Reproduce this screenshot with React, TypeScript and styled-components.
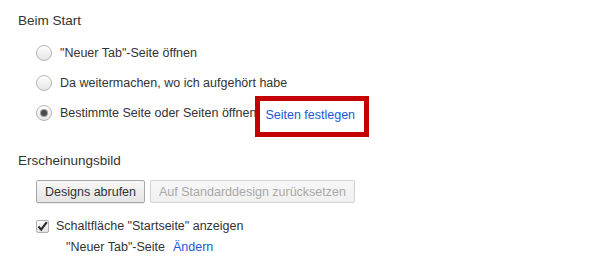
import React from 'react';
import styled, { createGlobalStyle } from 'styled-components';

const GlobalStyle = createGlobalStyle`
  body {
    margin: 0;
    background: #ffffff;
    font-family: "Liberation Sans", Arial, sans-serif;
    font-size: 12.5px;
    color: #333333;
  }
`;

const Page = styled.div`
  width: 600px;
  height: 260px;
  padding: 11px 0 0 18px;
  box-sizing: border-box;
  display: flex;
  flex-direction: column;
`;

const Heading = styled.div<{ gap: number }>`
  height: 20px;
  line-height: 20px;
  font-size: 13.5px;
  color: #333333;
  margin-top: ${props => props.gap}px;
`;

const Group = styled.div<{ gap: number }>`
  display: flex;
  flex-direction: column;
  padding-left: 18px;
  margin-top: ${props => props.gap}px;
`;

const Row = styled.div<{ height: number; indent?: number; top?: number }>`
  display: flex;
  align-items: center;
  height: ${props => props.height}px;
  padding-left: ${props => props.indent || 0}px;
  margin-top: ${props => props.top || 0}px;
  white-space: nowrap;
`;

const Radio = styled.span<{ checked?: boolean }>`
  width: 14px;
  height: 14px;
  border-radius: 50%;
  border: 1px solid #b4b4b4;
  background: linear-gradient(#fdfdfd, #e6e6e6);
  box-shadow: inset 0 1px 1px #ffffff;
  margin-right: 8px;
  flex-shrink: 0;
  display: flex;
  align-items: center;
  justify-content: center;
  &::after {
    content: '';
    display: ${props => (props.checked ? 'block' : 'none')};
    width: 6px;
    height: 6px;
    border-radius: 50%;
    background: #4a4a4a;
    box-shadow: 0 0 0 1px #9a9a9a;
  }
`;

const Label = styled.span`
  color: #333333;
`;

const Link = styled.span<{ gap?: number }>`
  color: #1a5ad6;
  margin-left: ${props => props.gap || 0}px;
`;

const Highlight = styled.span`
  align-self: flex-start;
  display: inline-flex;
  align-items: center;
  height: 41px;
  box-sizing: border-box;
  border: 5px solid #c40000;
  padding: 0 9px 3px 5px;
  margin: -2px 0 -9px -1px;
`;

const Buttons = styled.div`
  display: flex;
  gap: 5px;
`;

const Button = styled.button<{ disabled?: boolean }>`
  height: 23px;
  padding: 0 8px;
  font-family: "Liberation Sans", Arial, sans-serif;
  font-size: 12.5px;
  border-radius: 2px;
  border: 1px solid ${props => (props.disabled ? '#d2d2d2' : '#a8a8a8')};
  color: ${props => (props.disabled ? '#a9a9a9' : '#333333')};
  background: ${props =>
    props.disabled ? 'linear-gradient(#f7f7f7, #f0f0f0)' : 'linear-gradient(#f8f8f8, #e4e4e4)'};
  box-shadow: ${props => (props.disabled ? 'none' : '0 1px 0 rgba(0,0,0,0.08)')};
`;

const Check = styled.span`
  width: 13px;
  height: 13px;
  box-sizing: border-box;
  border: 1px solid #b0b0b0;
  border-radius: 2px;
  background: linear-gradient(#fdfdfd, #e2e2e2);
  margin-right: 7px;
  display: flex;
  align-items: center;
  justify-content: center;
  flex-shrink: 0;
`;

const CheckMark = () => (
  <svg width="11" height="11" viewBox="0 0 11 11">
    <path d="M1.5 5.5 L4.2 8.6 L9.8 1.2" fill="none" stroke="#2b2b2b" strokeWidth="2.2" />
  </svg>
);

export default function App() {
  return (
    <>
      <GlobalStyle />
      <Page>
        <Heading gap={0}>Beim Start</Heading>
        <Group gap={7}>
          <Row height={30}>
            <Radio />
            <Label>"Neuer Tab"-Seite öffnen</Label>
          </Row>
          <Row height={30}>
            <Radio />
            <Label>Da weitermachen, wo ich aufgehört habe</Label>
          </Row>
          <Row height={30}>
            <Radio checked />
            <Label>Bestimmte Seite oder Seiten öffnen</Label>
            <Highlight>
              <Link>Seiten festlegen</Link>
            </Highlight>
          </Row>
        </Group>
        <Heading gap={23}>Erscheinungsbild</Heading>
        <Group gap={9}>
          <Buttons>
            <Button>Designs abrufen</Button>
            <Button disabled>Auf Standarddesign zurücksetzen</Button>
          </Buttons>
          <Row height={20} top={13}>
            <Check>
              <CheckMark />
            </Check>
            <Label>Schaltfläche "Startseite" anzeigen</Label>
          </Row>
          <Row height={22} indent={30}>
            <Label>"Neuer Tab"-Seite</Label>
            <Link gap={8}>Ändern</Link>
          </Row>
        </Group>
      </Page>
    </>
  );
}
